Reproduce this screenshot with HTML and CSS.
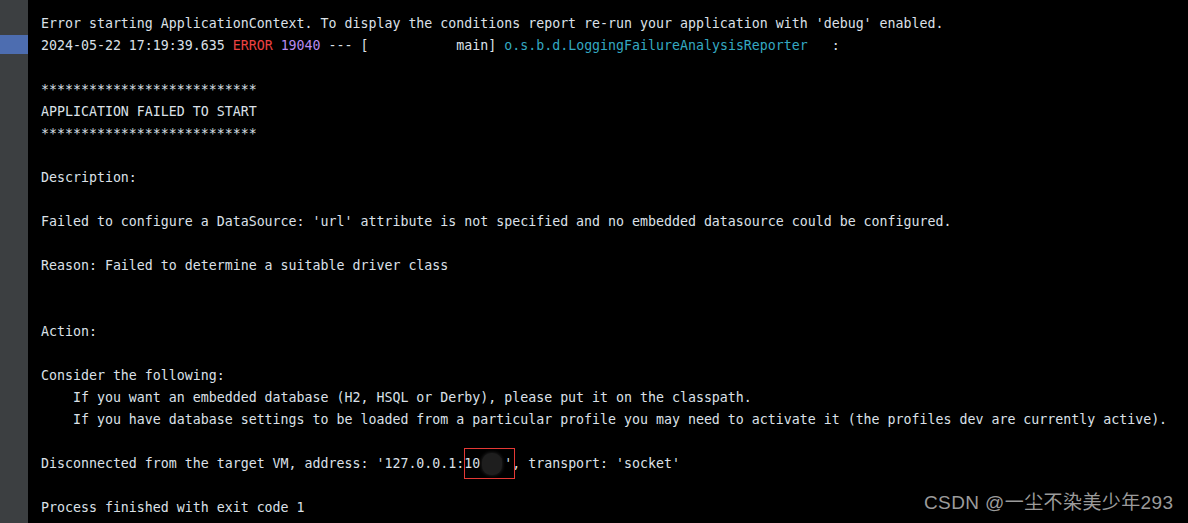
FILE: index.html
```html
<!DOCTYPE html>
<html>
<head>
<meta charset="utf-8">
<link rel="stylesheet" href="styles.css">
</head>
<body>
<div class="console">
  <div class="gutter"><div class="gutter-mark"></div></div>
  <div class="output">
<pre class="log">Error starting ApplicationContext. To display the conditions report re-run your application with 'debug' enabled.
2024-05-22 17:19:39.635 <span class="err">ERROR</span> <span class="pid">19040</span> --- [           main] <span class="logger">o.s.b.d.LoggingFailureAnalysisReporter</span>   :

***************************
APPLICATION FAILED TO START
***************************

Description:

Failed to configure a DataSource: 'url' attribute is not specified and no embedded datasource could be configured.

Reason: Failed to determine a suitable driver class


Action:

Consider the following:
    If you want an embedded database (H2, HSQL or Derby), please put it on the classpath.
    If you have database settings to be loaded from a particular profile you may need to activate it (the profiles dev are currently active).

Disconnected from the target VM, address: '127.0.0.1:10<span class="masked">  </span>'', transport: 'socket'

Process finished with exit code 1</pre>
  </div>
  <div class="redact-box"><div class="blur"></div></div>
  <div class="watermark">CSDN @一尘不染美少年293</div>
</div>
</body>
</html>
```

FILE: styles.css
```css
html, body {
  margin: 0;
  padding: 0;
  background: #000;
}
.console {
  position: relative;
  display: flex;
  width: 1188px;
  height: 523px;
  overflow: hidden;
  background: #000;
}
.gutter {
  width: 28px;
  flex: none;
  background: #3c3f41;
  padding-top: 35px;
  box-sizing: border-box;
}
.gutter-mark {
  height: 19px;
  background: #4d6db0;
}
.output {
  flex: 1;
  padding: 13px 0 0 13px;
}
.log {
  margin: 0;
  font-family: "DejaVu Sans Mono", "Liberation Mono", monospace;
  font-size: 13.28px;
  line-height: 22px;
  color: #dce0e8;
  white-space: pre;
}
.err { color: #ec4242; }
.pid { color: #b98cf0; }
.logger { color: #34a9c2; }
.masked { color: transparent; }
.redact-box {
  position: absolute;
  left: 464px;
  top: 448px;
  width: 49px;
  height: 29px;
  border: 1.5px solid #e53935;
}
.blur {
  position: absolute;
  left: 17px;
  top: 4px;
  width: 20px;
  height: 22px;
  border-radius: 9px;
  background: #1e1e1e;
  box-shadow: 0 0 3px 1px #1a1a1a;
}
.watermark {
  position: absolute;
  left: 924px;
  top: 490px;
  font-family: "Liberation Sans", "Noto Sans CJK SC", sans-serif;
  font-size: 19px;
  letter-spacing: 0.4px;
  line-height: 26px;
  color: #9b9b9b;
}
```
